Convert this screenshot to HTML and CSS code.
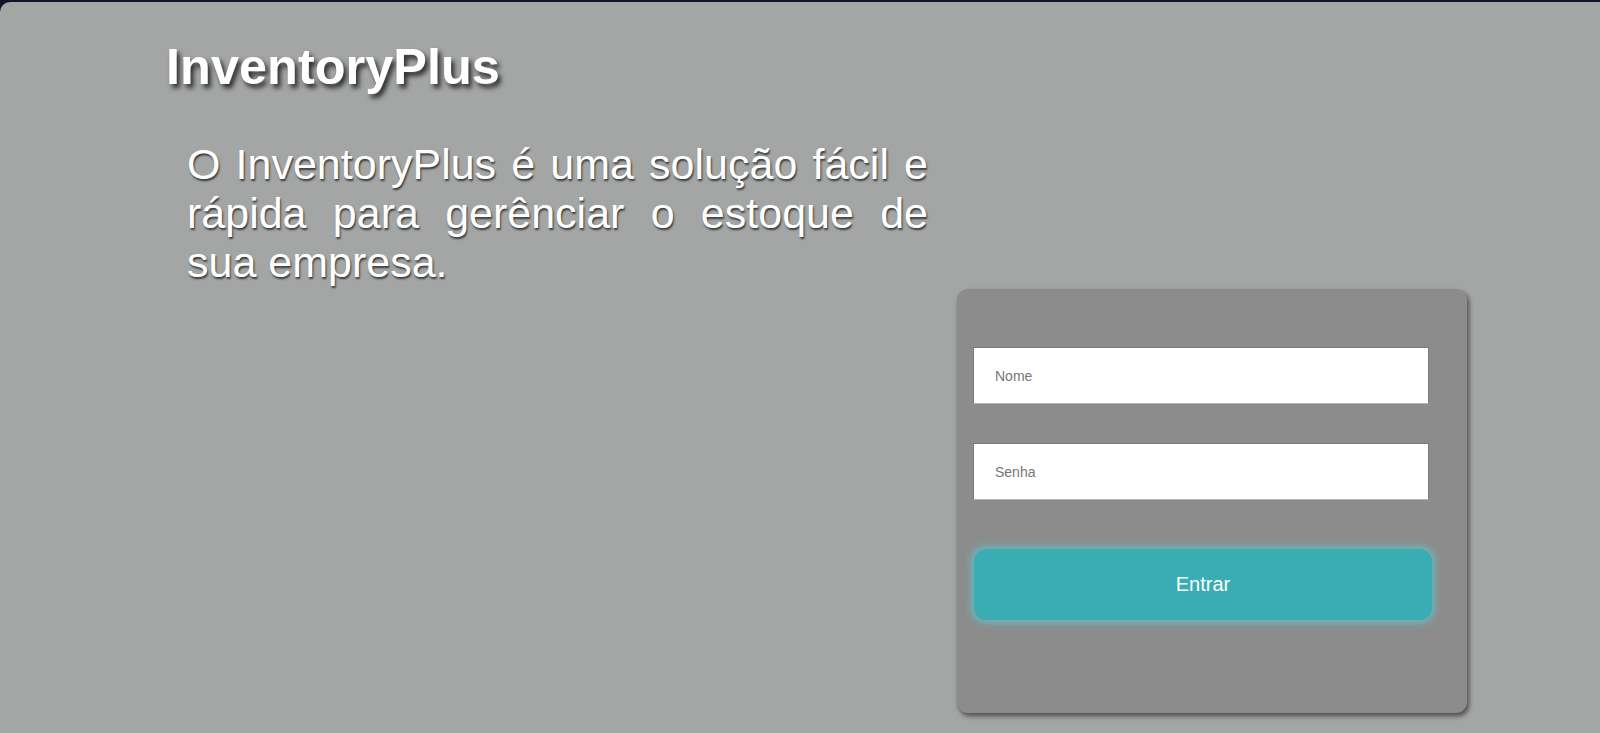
FILE: index.html
```html
<!DOCTYPE html>
<html lang="pt-BR">
<head>
<meta charset="utf-8">
<title>InventoryPlus</title>
<link rel="stylesheet" href="styles.css">
</head>
<body>
<main class="page">
  <section class="intro">
    <h1 class="brand">InventoryPlus</h1>
    <p class="lead">O InventoryPlus é uma solução fácil e rápida para gerênciar o estoque de sua empresa.</p>
  </section>
  <form class="login" onsubmit="return false;">
    <input class="field" type="text" placeholder="Nome">
    <input class="field" type="password" placeholder="Senha">
    <button class="submit" type="submit">Entrar</button>
  </form>
</main>
</body>
</html>
```
FILE: styles.css
```css
html, body {
  margin: 0;
  padding: 0;
}
body {
  background: #12152a;
  font-family: "Liberation Sans", Arial, sans-serif;
  overflow: hidden;
}
.page {
  margin-top: 2px;
  height: 731px;
  box-sizing: border-box;
  background: #a4a6a5;
  border-top-left-radius: 10px;
  display: flex;
  align-items: flex-start;
  gap: 29px;
  padding: 36px 0 0 166px;
}
.intro {
  width: 762px;
  flex: none;
}
.brand {
  margin: 0;
  font-size: 50.5px;
  line-height: 58px;
  font-weight: 700;
  color: #ffffff;
  text-shadow: 3px 4px 5px rgba(0, 0, 0, 0.75);
}
.lead {
  margin: 44px 0 0 0;
  padding-left: 21px;
  font-size: 43px;
  line-height: 49px;
  color: #ffffff;
  text-align: justify;
  text-shadow: 1px 2px 2px rgba(0, 0, 0, 0.65);
}
.login {
  margin-top: 251px;
  width: 510px;
  height: 424px;
  box-sizing: border-box;
  background: #8c8c8c;
  border-radius: 11px;
  box-shadow: 2px 3px 5px rgba(0, 0, 0, 0.55);
  display: flex;
  flex-direction: column;
  padding: 58px 0 0 16px;
}
.field {
  width: 456px;
  height: 57px;
  box-sizing: border-box;
  margin: 0;
  padding: 0 0 0 21px;
  border: 1px solid;
  border-color: #7a7a7a #7a7a7a #b4b4b4 #7a7a7a;
  background: #ffffff;
  font-family: "Liberation Sans", Arial, sans-serif;
  font-size: 14px;
  color: #333;
  outline: none;
}
.field + .field {
  margin-top: 39px;
}
.field::placeholder {
  color: #767676;
}
.submit {
  margin: 49px 0 0 1px;
  width: 458px;
  height: 71px;
  border: none;
  border-radius: 12px;
  background: #3aacb3;
  box-shadow: 0 0 8px 2px rgba(90, 210, 218, 0.75);
  color: #ffffff;
  font-family: "Liberation Sans", Arial, sans-serif;
  font-size: 20px;
  cursor: pointer;
}
```
